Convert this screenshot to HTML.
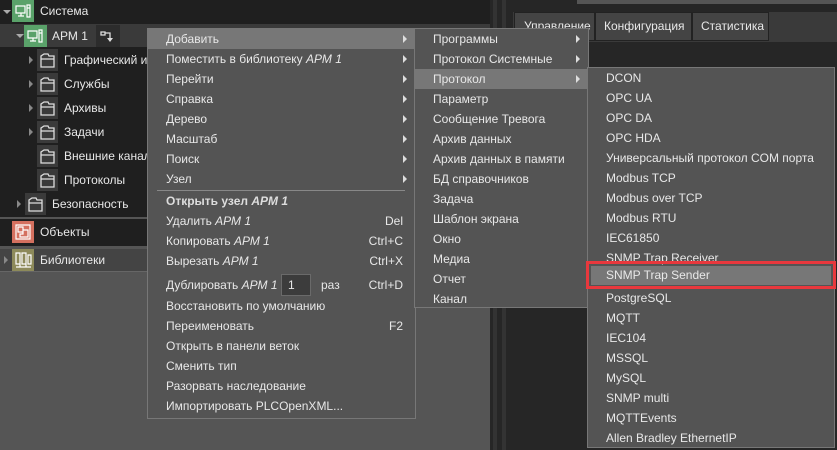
<!DOCTYPE html>
<html><head><meta charset="utf-8"><style>
*{margin:0;padding:0;box-sizing:border-box}
body{width:837px;height:450px;overflow:hidden;background:#555;font-family:"Liberation Sans","DejaVu Sans",sans-serif;font-size:12px;color:#e8e8e8;position:relative}
.abs{position:absolute}
.tree{left:0;top:0;width:490px;height:217px;background:#1f1f1f}
.row{position:absolute;height:22px;line-height:22px;white-space:nowrap}
.ico{position:absolute;width:21px;height:22px;background:#3a3a3a}
.ico svg{position:absolute;left:0;top:0}
.arr{position:absolute;width:0;height:0;border-top:4px solid transparent;border-bottom:4px solid transparent;border-left:4px solid #888}
.darr{position:absolute;width:0;height:0;border-left:4px solid transparent;border-right:4px solid transparent;border-top:4px solid #aaa}
.menu{position:absolute;background:#545454;border:1px solid #777}
.it{position:absolute;left:0;right:0;height:20px;line-height:20px;padding-left:18px;white-space:nowrap}
.it.h{background:#777}
.sub{position:absolute;right:8px;top:6px;width:0;height:0;border-top:4px solid transparent;border-bottom:4px solid transparent;border-left:4px solid #ddd}
.sc{position:absolute;right:12px;top:0}
i{font-style:italic}
</style></head><body>
<svg width="0" height="0" style="position:absolute"><defs>
<g id="fold"><path d="M4 18 L4 7 L7 5 L11 5 L12 7 L17 7 L17 18 Z M4 10 L17 10" fill="none" stroke="#ddd" stroke-width="1.3"/></g>
<g id="pc"><path d="M4 6 h9 v7 h-9 z M6 16 h6 M9 13 v3 M15 5 h3 v12 h-3 z M15 8 h3" fill="none" stroke="#fff" stroke-width="1.2"/></g>
</defs></svg>
<!-- tree -->
<div class="abs tree"></div>
<div class="abs" style="left:0;top:24px;width:490px;height:23px;background:#3a3a3a"></div>
<div class="darr" style="left:3px;top:10px"></div>
<div class="ico" style="left:12px;top:0;background:#5aa26a;width:22px"><svg width="22" height="22"><use href="#pc"/></svg></div>
<div class="row" style="left:40px;top:0">Система</div>
<div class="darr" style="left:16px;top:34px"></div>
<div class="ico" style="left:24px;top:25px;background:#5aa26a;width:23px"><svg width="22" height="22"><use href="#pc"/></svg></div>
<div class="row" style="left:52px;top:25px">АРМ 1</div>
<div class="abs" style="left:96px;top:25px;width:24px;height:22px;background:#2c2c2c"><svg width="24" height="22"><path d="M5 7 h4 v3 h-4 z M9 8 h5 v6" fill="none" stroke="#ddd" stroke-width="1.3"/><path d="M11 13 h6 l-3 4 z" fill="#ddd"/></svg></div>

<div class="arr" style="left:29px;top:56px"></div><div class="ico" style="left:37px;top:49px"><svg width="21" height="22"><use href="#fold"/></svg></div><div class="row" style="left:64px;top:49px">Графический и</div>
<div class="arr" style="left:29px;top:80px"></div><div class="ico" style="left:37px;top:73px"><svg width="21" height="22"><use href="#fold"/></svg></div><div class="row" style="left:64px;top:73px">Службы</div>
<div class="arr" style="left:29px;top:104px"></div><div class="ico" style="left:37px;top:97px"><svg width="21" height="22"><use href="#fold"/></svg></div><div class="row" style="left:64px;top:97px">Архивы</div>
<div class="arr" style="left:29px;top:128px"></div><div class="ico" style="left:37px;top:121px"><svg width="21" height="22"><use href="#fold"/></svg></div><div class="row" style="left:64px;top:121px">Задачи</div>
<div class="ico" style="left:37px;top:145px"><svg width="21" height="22"><use href="#fold"/></svg></div><div class="row" style="left:64px;top:145px">Внешние канал</div>
<div class="ico" style="left:37px;top:169px"><svg width="21" height="22"><use href="#fold"/></svg></div><div class="row" style="left:64px;top:169px">Протоколы</div>
<div class="arr" style="left:17px;top:200px"></div><div class="ico" style="left:25px;top:193px"><svg width="21" height="22"><use href="#fold"/></svg></div><div class="row" style="left:52px;top:193px">Безопасность</div>

<div class="abs" style="left:0;top:219px;width:490px;height:27px;background:#1f1f1f"></div>
<div class="ico" style="left:12px;top:221px;background:#d4705f;width:22px"><svg width="22" height="22"><path d="M4 4 h14 v14 h-14 z M6 6 h5 v5 h-5 z M11 9 h5 v7 h-8 v-3 h3 z" fill="none" stroke="#fff" stroke-width="1.2"/></svg></div>
<div class="row" style="left:40px;top:221px">Объекты</div>
<div class="abs" style="left:0;top:249px;width:490px;height:23px;background:#444;border-bottom:1px solid #666"></div>
<div class="arr" style="left:4px;top:256px"></div>
<div class="ico" style="left:12px;top:249px;background:#8d8a5a;width:22px"><svg width="22" height="22"><path d="M4 4 h4 v11 h-4 z M10 4 h4 v11 h-4 z M16 6 h3 v9 h-3 z M4 18 h15 M8 15 v3 M14 15 v3" fill="none" stroke="#fff" stroke-width="1.2"/></svg></div>
<div class="row" style="left:40px;top:249px">Библиотеки</div>

<!-- right panel -->
<div class="abs" style="left:490px;top:0;width:347px;height:450px;background:#262626"></div>
<div class="abs" style="left:493px;top:0;width:4px;height:450px;background:#333"></div>
<div class="abs" style="left:502px;top:0;width:4px;height:450px;background:#333"></div>
<div class="abs" style="left:577px;top:0;width:260px;height:4px;background:#555"></div>
<div class="abs" style="left:513px;top:12px;width:324px;height:30px;background:#3a3a3a"></div>
<div class="abs" style="left:514px;top:12px;width:81px;height:29px;background:#444;border:1px solid #222;line-height:27px;padding-left:9px">Управление</div>
<div class="abs" style="left:595px;top:12px;width:97px;height:29px;background:#444;border:1px solid #222;line-height:27px;padding-left:8px">Конфигурация</div>
<div class="abs" style="left:692px;top:12px;width:77px;height:29px;background:#444;border:1px solid #222;line-height:27px;padding-left:8px">Статистика</div>

<!-- menu 1 -->
<div class="menu" style="left:147px;top:28px;width:269px;height:391px">
<div class="it h" style="top:0">Добавить<div class="sub"></div></div>
<div class="it" style="top:20px">Поместить в библиотеку <i>АРМ 1</i><div class="sub"></div></div>
<div class="it" style="top:40px">Перейти<div class="sub"></div></div>
<div class="it" style="top:60px">Справка<div class="sub"></div></div>
<div class="it" style="top:80px">Дерево<div class="sub"></div></div>
<div class="it" style="top:100px">Масштаб<div class="sub"></div></div>
<div class="it" style="top:120px">Поиск<div class="sub"></div></div>
<div class="it" style="top:140px">Узел<div class="sub"></div></div>
<div class="abs" style="left:9px;top:161px;width:248px;height:1px;background:#888"></div>
<div class="it" style="top:162px;font-weight:bold;color:#ddd">Открыть узел <i>АРМ 1</i></div>
<div class="it" style="top:182px">Удалить <i>АРМ 1</i><span class="sc">Del</span></div>
<div class="it" style="top:202px">Копировать <i>АРМ 1</i><span class="sc">Ctrl+C</span></div>
<div class="it" style="top:222px">Вырезать <i>АРМ 1</i><span class="sc">Ctrl+X</span></div>
<div class="it" style="top:244px;height:24px;line-height:24px">Дублировать <i>АРМ 1</i><span class="abs" style="left:133px;top:1px;width:30px;height:22px;background:#3c3c3c;border:1px solid #6a6a6a;line-height:20px;padding-left:6px">1</span><span class="abs" style="left:173px;top:0">раз</span><span class="sc">Ctrl+D</span></div>
<div class="it" style="top:267px">Восстановить по умолчанию</div>
<div class="it" style="top:287px">Переименовать<span class="sc">F2</span></div>
<div class="it" style="top:307px">Открыть в панели веток</div>
<div class="it" style="top:327px">Сменить тип</div>
<div class="it" style="top:347px">Разорвать наследование</div>
<div class="it" style="top:367px">Импортировать PLCOpenXML...</div>
</div>

<!-- menu 2 -->
<div class="menu" style="left:414px;top:28px;width:175px;height:280px">
<div class="it" style="top:0">Программы<div class="sub"></div></div>
<div class="it" style="top:20px">Протокол Системные<div class="sub"></div></div>
<div class="it h" style="top:40px">Протокол<div class="sub"></div></div>
<div class="it" style="top:60px">Параметр</div>
<div class="it" style="top:80px">Сообщение Тревога</div>
<div class="it" style="top:100px">Архив данных</div>
<div class="it" style="top:120px">Архив данных в памяти</div>
<div class="it" style="top:140px">БД справочников</div>
<div class="it" style="top:160px">Задача</div>
<div class="it" style="top:180px">Шаблон экрана</div>
<div class="it" style="top:200px">Окно</div>
<div class="it" style="top:220px">Медиа</div>
<div class="it" style="top:240px">Отчет</div>
<div class="it" style="top:260px">Канал</div>
</div>

<!-- menu 3 -->
<div class="menu" style="left:587px;top:67px;width:248px;height:381px">
<div class="it" style="top:0">DCON</div>
<div class="it" style="top:20px">OPC UA</div>
<div class="it" style="top:40px">OPC DA</div>
<div class="it" style="top:60px">OPC HDA</div>
<div class="it" style="top:80px">Универсальный протокол COM порта</div>
<div class="it" style="top:100px">Modbus TCP</div>
<div class="it" style="top:120px">Modbus over TCP</div>
<div class="it" style="top:140px">Modbus RTU</div>
<div class="it" style="top:160px">IEC61850</div>
<div class="it" style="top:180px">SNMP Trap Receiver</div>
<div class="it h" style="top:198px;left:3px;right:3px;height:19px;line-height:19px;padding-left:15px">SNMP Trap Sender</div>
<div class="it" style="top:220px">PostgreSQL</div>
<div class="it" style="top:240px">MQTT</div>
<div class="it" style="top:260px">IEC104</div>
<div class="it" style="top:280px">MSSQL</div>
<div class="it" style="top:300px">MySQL</div>
<div class="it" style="top:320px">SNMP multi</div>
<div class="it" style="top:340px">MQTTEvents</div>
<div class="it" style="top:360px">Allen Bradley EthernetIP</div>
</div>
<div class="abs" style="left:586px;top:261px;width:250px;height:28px;border:3px solid #e8383d"></div>
</body></html>
